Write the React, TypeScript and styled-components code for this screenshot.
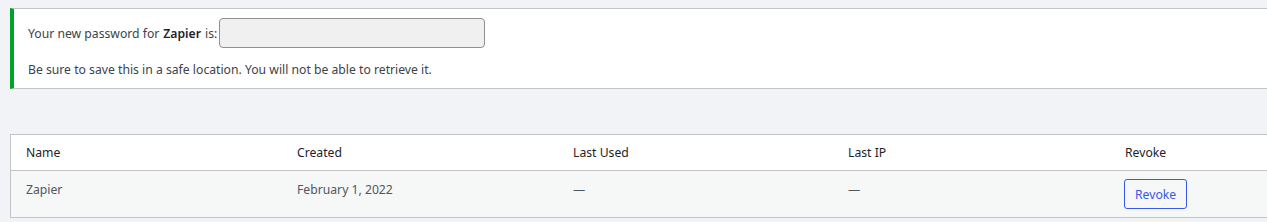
import { createGlobalStyle, styled } from "styled-components";

const GlobalStyle = createGlobalStyle`
  html, body {
    margin: 0;
    padding: 0;
    background: #f2f3f6;
    overflow: hidden;
  }
  body {
    font-family: "Noto Sans", "Liberation Sans", sans-serif;
    font-size: 12.2px;
    line-height: 19px;
    color: #3c434a;
  }
`;

const Page = styled.div`
  padding: 8px 0 0 10px;
  width: 1400px;
`;

const Notice = styled.div`
  background: #fff;
  border: 1px solid #c3c4c7;
  border-left: 4px solid #00a32a;
  border-right: none;
  padding: 1px 12px 9px;
  margin-bottom: 45px;
`;

const NoticeLine = styled.p<{ $first?: boolean }>`
  display: flex;
  align-items: center;
  margin: ${(p) => (p.$first ? "8px 0 0" : "12px 0 0")};
  padding: 0 2px;
  min-height: ${(p) => (p.$first ? "30px" : "19px")};
`;

const Strong = styled.strong`
  font-weight: 600;
  color: #1d2327;
  margin: 0 4px;
`;

const PasswordInput = styled.input`
  margin-left: 2px;
  width: 266px;
  height: 30px;
  box-sizing: border-box;
  background: #f0f0f1;
  border: 1px solid #8c8f94;
  border-radius: 4px;
  font: inherit;
`;

const Table = styled.div`
  background: #fff;
  border: 1px solid #c3c4c7;
  border-right: none;
`;

const Row = styled.div<{ $head?: boolean }>`
  display: grid;
  grid-template-columns: 271px 276px 275px 277px 1fr;
  padding-left: 15px;
  align-items: ${(p) => (p.$head ? "center" : "start")};
  height: ${(p) => (p.$head ? "35px" : "46px")};
  background: ${(p) => (p.$head ? "#fff" : "#f6f7f7")};
  border-top: ${(p) => (p.$head ? "none" : "1px solid #c3c4c7")};
  color: ${(p) => (p.$head ? "#1d2327" : "#50575e")};
`;

const Cell = styled.div<{ $pad?: number }>`
  padding-top: ${(p) => p.$pad ?? 0}px;
`;

const RevokeButton = styled.button`
  margin-top: 8px;
  margin-left: -1px;
  height: 30px;
  padding: 0 10px;
  background: #f6f7f7;
  border: 1px solid #3858e9;
  border-radius: 3px;
  color: #3858e9;
  font: inherit;
  cursor: pointer;
`;

export default function App() {
  return (
    <>
      <GlobalStyle />
      <Page>
        <Notice>
          <NoticeLine $first>
            Your new password for<Strong>Zapier</Strong>is:
            <PasswordInput type="text" readOnly />
          </NoticeLine>
          <NoticeLine>
            Be sure to save this in a safe location. You will not be able to retrieve it.
          </NoticeLine>
        </Notice>
        <Table>
          <Row $head>
            <Cell>Name</Cell>
            <Cell>Created</Cell>
            <Cell>Last Used</Cell>
            <Cell>Last IP</Cell>
            <Cell>Revoke</Cell>
          </Row>
          <Row>
            <Cell $pad={9}>Zapier</Cell>
            <Cell $pad={9}>February 1, 2022</Cell>
            <Cell $pad={9}>—</Cell>
            <Cell $pad={9}>—</Cell>
            <Cell>
              <RevokeButton>Revoke</RevokeButton>
            </Cell>
          </Row>
        </Table>
      </Page>
    </>
  );
}
